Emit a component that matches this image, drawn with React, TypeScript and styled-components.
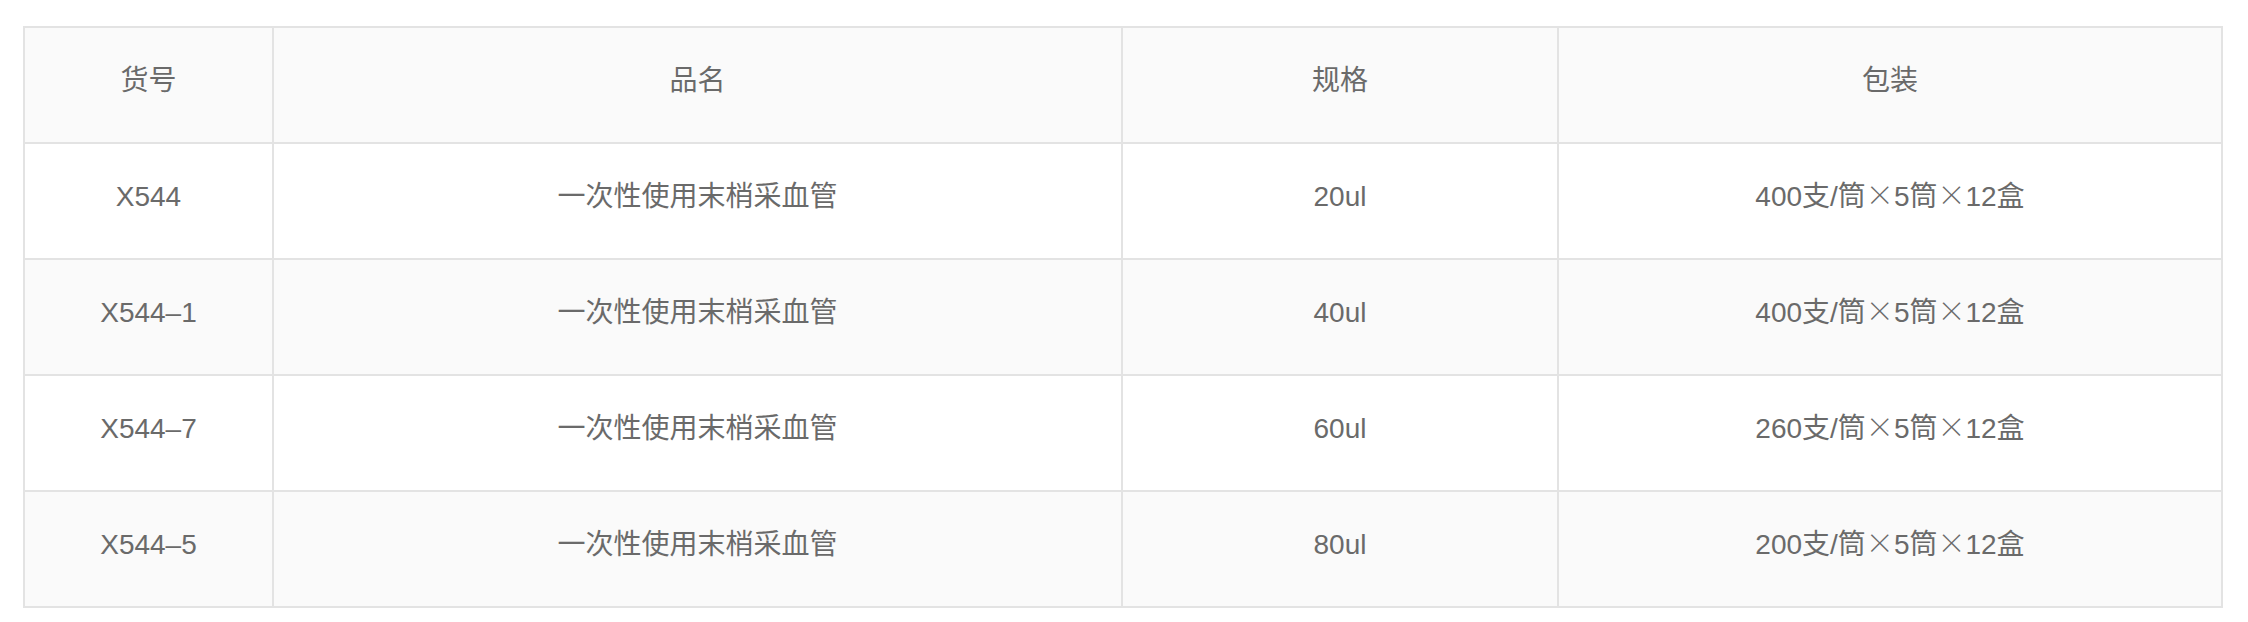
import * as React from 'react';
import styled, { createGlobalStyle } from 'styled-components';

type Product = {
    code: string,
    name: string,
    spec: string,
    pack: string,
}

const products: Product[] = [
    { code: 'X544', name: '一次性使用末梢采血管', spec: '20ul', pack: '400支/筒×5筒×12盒' },
    { code: 'X544-1', name: '一次性使用末梢采血管', spec: '40ul', pack: '400支/筒×5筒×12盒' },
    { code: 'X544-7', name: '一次性使用末梢采血管', spec: '60ul', pack: '260支/筒×5筒×12盒' },
    { code: 'X544-5', name: '一次性使用末梢采血管', spec: '80ul', pack: '200支/筒×5筒×12盒' },
];

const headings = ['货号', '品名', '规格', '包装'];

const borderColor = '#e3e3e3';

const GlobalStyle = createGlobalStyle`
    * {
        box-sizing: border-box;
    }

    body {
        margin: 0;
        background: #fff;
        font-family: "Liberation Sans", "Noto Sans CJK SC", sans-serif;
    }
`;

const Page = styled.div`
    padding: 26px 0 0 23px;
`;

const Grid = styled.div`
    display: grid;
    grid-template-columns: 247px 847px 434px 662px;
    grid-auto-rows: 114px;
    gap: 2px;
    padding: 2px;
    width: 2200px;
    background: ${borderColor};
`;

const Cell = styled.div<{ $shaded: boolean }>`
    display: flex;
    align-items: center;
    justify-content: center;
    padding-bottom: 8px;
    background: ${p => p.$shaded ? '#fafafa' : '#fff'};
    color: #6a6a6a;
    font-size: 28px;
    line-height: 1;
    white-space: nowrap;
`;

// the multiplication sign is full width in the original
const Times = styled.span`
    font-family: "Noto Sans CJK SC", sans-serif;
    font-weight: 300;
    line-height: 0;
`;

const Pack: React.FC<{ text: string }> = ({ text }) => {
    const parts = text.split('×');
    return <span>
        {parts.map((part, i) => <React.Fragment key={i}>
            {i > 0 && <Times>×</Times>}
            {part}
        </React.Fragment>)}
    </span>;
};

export default function App() {
    return <>
        <GlobalStyle />
        <Page>
            <Grid>
                {headings.map(h => <Cell key={h} $shaded>{h}</Cell>)}
                {products.map((p, i) => {
                    const shaded = i % 2 === 1;
                    return <React.Fragment key={p.code}>
                        <Cell $shaded={shaded}>{p.code.replace('-', '–')}</Cell>
                        <Cell $shaded={shaded}>{p.name}</Cell>
                        <Cell $shaded={shaded}>{p.spec}</Cell>
                        <Cell $shaded={shaded}><Pack text={p.pack} /></Cell>
                    </React.Fragment>;
                })}
            </Grid>
        </Page>
    </>;
}
